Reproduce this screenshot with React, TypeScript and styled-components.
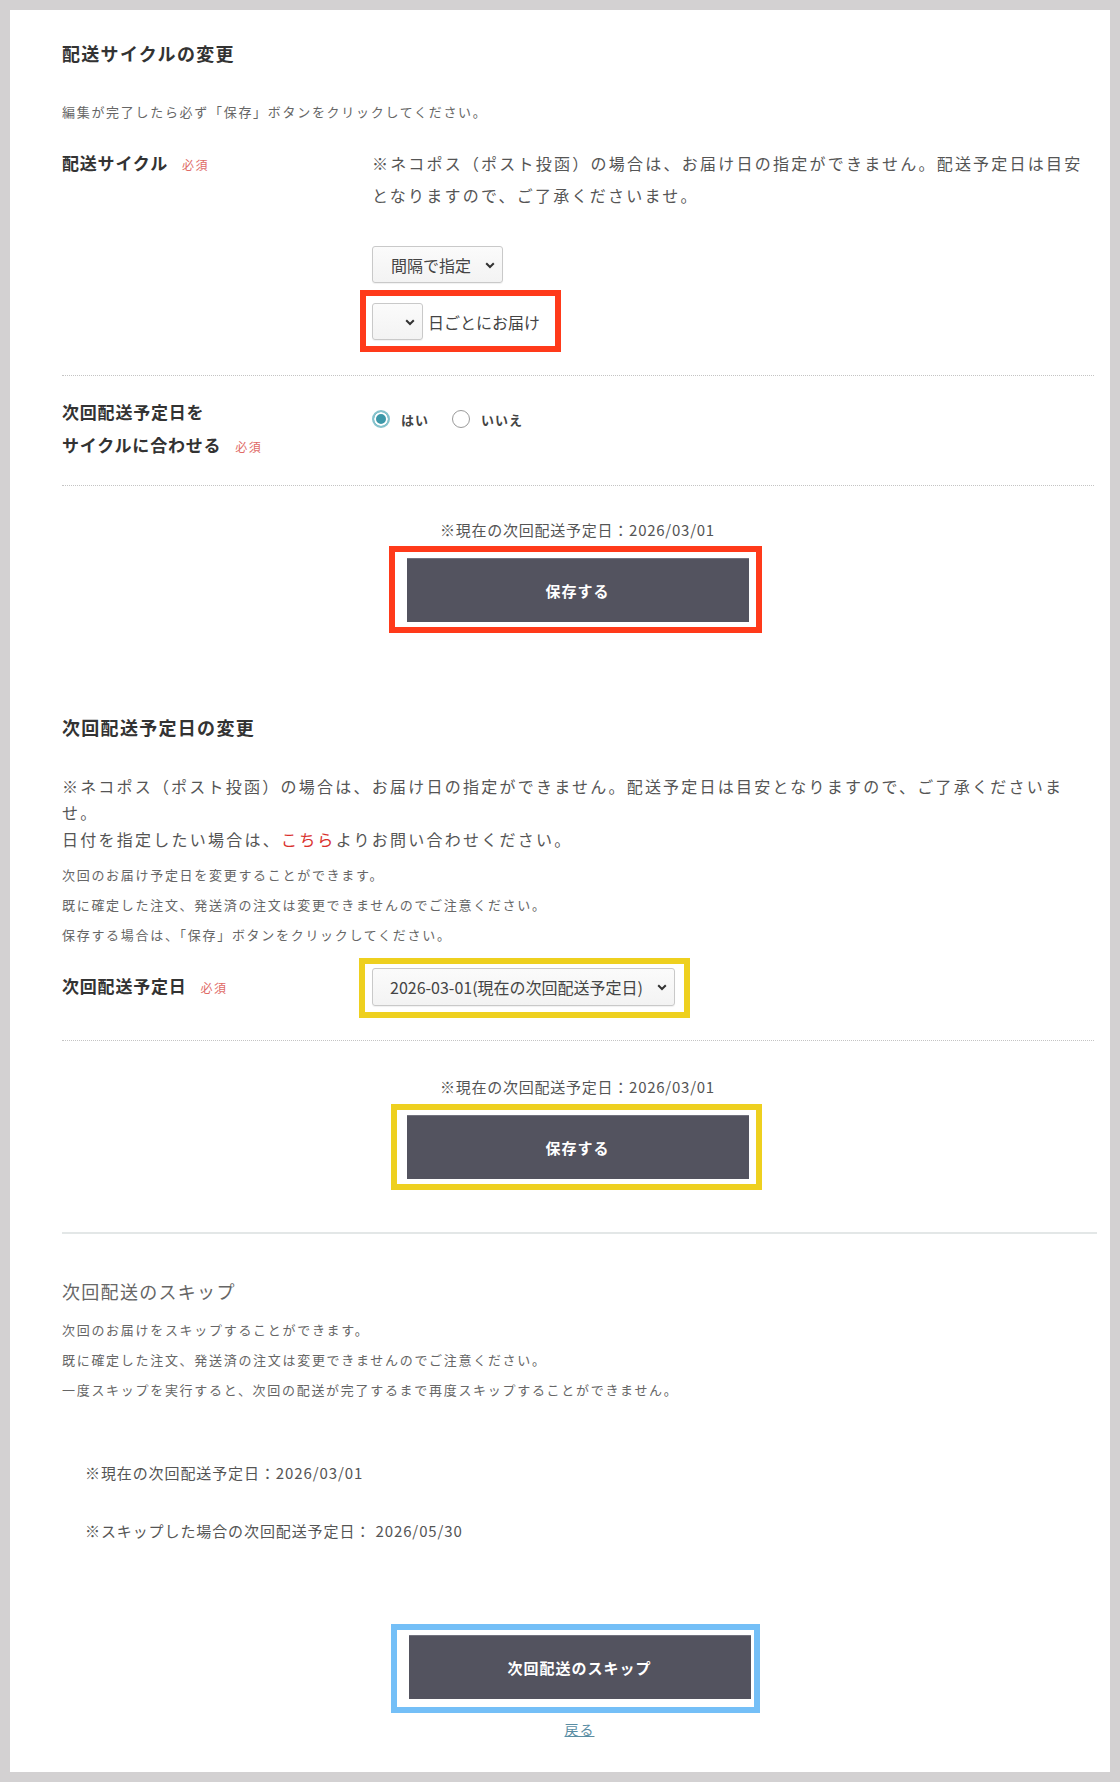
import React from 'react';
import styled, { createGlobalStyle } from 'styled-components';

const GlobalStyle = createGlobalStyle`
  html, body { margin: 0; padding: 0; background: #d3d1d2; }
  body {
    font-family: "Noto Sans CJK JP", "Noto Sans", sans-serif;
    color: #444;
  }
  * { box-sizing: border-box; }
`;

const Frame = styled.div`
  padding: 10px;
  background: #d3d1d2;
`;

const Panel = styled.main`
  background: #fff;
  min-height: 1762px;
  padding: 30px 13px 32px 52px;
`;

const SectionTitle = styled.h2<{ $light?: boolean }>`
  margin: 0;
  font-size: 18px;
  line-height: 27px;
  letter-spacing: 1.3px;
  font-weight: ${p => (p.$light ? 400 : 700)};
  color: ${p => (p.$light ? '#666' : '#333')};
`;

const Note = styled.p<{ $mt?: number; $lh?: number }>`
  margin: ${p => p.$mt ?? 0}px 0 0;
  font-size: 13px;
  line-height: ${p => p.$lh ?? 20}px;
  letter-spacing: 1.7px;
  color: #666;
`;

const FormRow = styled.div<{ $pt: number; $pb: number }>`
  display: grid;
  grid-template-columns: 310px 1fr;
  align-items: start;
  margin-right: 3px;
  padding: ${p => p.$pt}px 0 ${p => p.$pb}px;
  border-bottom: 1px dotted #c4c4c4;
`;

const Label = styled.div<{ $pt?: number; $lh?: number }>`
  padding-top: ${p => p.$pt ?? 0}px;
  font-size: 17px;
  line-height: ${p => p.$lh ?? 32}px;
  letter-spacing: 0.8px;
  font-weight: 700;
  color: #333;
`;

const Required = styled.span`
  margin-left: 14px;
  font-size: 12px;
  letter-spacing: 1.5px;
  font-weight: 400;
  color: #e06a66;
`;

const Field = styled.div<{ $pt?: number }>`
  padding-top: ${p => p.$pt ?? 0}px;
  min-width: 0;
`;

const FieldText = styled.p`
  margin: 0;
  font-size: 16px;
  line-height: 32px;
  letter-spacing: 0.14em;
  color: #555;
`;

const Paragraph = styled.p<{ $mt: number }>`
  margin: ${p => p.$mt}px 0 0;
  font-size: 16px;
  line-height: 26px;
  letter-spacing: 0.14em;
  color: #555;
`;

const RedLink = styled.a`
  color: #d9302c;
  text-decoration: none;
`;

const NoteList = styled.div<{ $mt: number }>`
  margin-top: ${p => p.$mt}px;
`;

const SelectWrap = styled.div<{ $mt?: number }>`
  position: relative;
  display: block;
  width: fit-content;
  margin-top: ${p => p.$mt ?? 0}px;
`;

const Select = styled.select<{ $w: number; $h: number; $pl: number }>`
  appearance: none;
  -webkit-appearance: none;
  display: block;
  width: ${p => p.$w}px;
  height: ${p => p.$h}px;
  padding: 0 24px 0 ${p => p.$pl}px;
  font-family: inherit;
  font-size: 16px;
  color: #444;
  background: linear-gradient(#fbfbfb, #f3f3f3);
  border: 1px solid #c9c9c9;
  border-radius: 3px;
  box-shadow: 0 1px 1px rgba(0, 0, 0, 0.06);
`;

const Chevron = styled.svg`
  position: absolute;
  right: 8px;
  top: 50%;
  width: 10px;
  height: 7px;
  margin-top: -3px;
  pointer-events: none;
`;

const Highlight = styled.div<{ $color: string; $inset: string; $mt?: number }>`
  position: relative;
  display: flex;
  align-items: center;
  gap: 5px;
  width: fit-content;
  margin-top: ${p => p.$mt ?? 0}px;
  &::after {
    content: '';
    position: absolute;
    inset: ${p => p.$inset};
    border: 6px solid ${p => p.$color};
    pointer-events: none;
  }
`;

const InlineText = styled.span`
  font-size: 16px;
  line-height: 20px;
  color: #444;
`;

const RadioGroup = styled.div`
  display: flex;
  align-items: center;
  gap: 23px;
  height: 20px;
`;

const RadioLabel = styled.label`
  display: flex;
  align-items: center;
  gap: 11px;
  font-size: 13px;
  font-weight: 700;
  letter-spacing: 1px;
  color: #444;
`;

const Radio = styled.input.attrs({ type: 'radio' })`
  appearance: none;
  -webkit-appearance: none;
  margin: 0;
  width: 18px;
  height: 18px;
  border-radius: 50%;
  border: 1.5px solid #9a9a9a;
  background: #fff;
  &:checked {
    border: 2px solid #86c3cd;
    background: #3d98a9;
    box-shadow: inset 0 0 0 2px #fff;
  }
`;

const SaveBlock = styled.div<{ $mt: number; $shift?: number }>`
  display: flex;
  flex-direction: column;
  align-items: center;
  gap: 16px;
  margin-top: ${p => p.$mt}px;
  padding-right: ${p => p.$shift ?? 0}px;
`;

const CurrentDate = styled.p`
  margin: 0;
  font-size: 15px;
  line-height: 24px;
  letter-spacing: 0.75px;
  color: #555;
`;

const DarkButton = styled.button`
  display: block;
  width: 342px;
  height: 64px;
  border: none;
  border-top: 1px solid #72727e;
  background: #53535f;
  color: #fff;
  font-family: inherit;
  font-size: 15px;
  font-weight: 700;
  letter-spacing: 1px;
  cursor: pointer;
`;

const Section = styled.section<{ $mt: number }>`
  margin-top: ${p => p.$mt}px;
`;

const SolidRule = styled.hr`
  margin: 53px 0 0;
  border: none;
  height: 2px;
  background: #e3e7e7;
`;

const DateLine = styled.p<{ $mt: number }>`
  margin: ${p => p.$mt}px 0 0;
  padding-left: 23px;
  font-size: 15px;
  line-height: 24px;
  letter-spacing: 0.9px;
  color: #555;
`;

const BackLink = styled.a`
  display: block;
  width: fit-content;
  margin: 20px auto 0;
  font-size: 14px;
  line-height: 20px;
  letter-spacing: 1px;
  color: #5a8da3;
  text-decoration: underline;
`;

const DownChevron = () => (
  <Chevron viewBox="0 0 10 7">
    <polyline points="1.2,1.2 5,5 8.8,1.2" fill="none" stroke="#333" strokeWidth="2" />
  </Chevron>
);

export default function App() {
  return (
    <>
      <GlobalStyle />
      <Frame>
        <Panel>
          <SectionTitle>配送サイクルの変更</SectionTitle>
          <Note $mt={35}>編集が完了したら必ず「保存」ボタンをクリックしてください。</Note>

          <FormRow $pt={25} $pb={35}>
            <Label>
              配送サイクル<Required>必須</Required>
            </Label>
            <Field>
              <FieldText>
                ※ネコポス（ポスト投函）の場合は、お届け日の指定ができません。配送予定日は目安となりますので、ご了承くださいませ。
              </FieldText>
              <SelectWrap $mt={35}>
                <Select $w={131} $h={37} $pl={18} defaultValue="interval">
                  <option value="interval">間隔で指定</option>
                </Select>
                <DownChevron />
              </SelectWrap>
              <Highlight $color="#ff3a1a" $inset="-13px -21px -12px -12px" $mt={20}>
                <SelectWrap>
                  <Select $w={51} $h={37} $pl={10} defaultValue="">
                    <option value=""></option>
                  </Select>
                  <DownChevron />
                </SelectWrap>
                <InlineText>日ごとにお届け</InlineText>
              </Highlight>
            </Field>
          </FormRow>

          <FormRow $pt={19} $pb={22}>
            <Label $lh={33}>
              次回配送予定日を
              <br />
              サイクルに合わせる<Required>必須</Required>
            </Label>
            <Field $pt={14}>
              <RadioGroup>
                <RadioLabel>
                  <Radio name="align" defaultChecked />
                  はい
                </RadioLabel>
                <RadioLabel>
                  <Radio name="align" />
                  いいえ
                </RadioLabel>
              </RadioGroup>
            </Field>
          </FormRow>

          <SaveBlock $mt={32} $shift={4}>
            <CurrentDate>※現在の次回配送予定日：2026/03/01</CurrentDate>
            <Highlight $color="#ff3a1a" $inset="-12px -13px -11px -18px">
              <DarkButton>保存する</DarkButton>
            </Highlight>
          </SaveBlock>

          <Section $mt={92}>
            <SectionTitle>次回配送予定日の変更</SectionTitle>
            <Paragraph $mt={32}>
              ※ネコポス（ポスト投函）の場合は、お届け日の指定ができません。配送予定日は目安となりますので、ご了承くださいませ。
            </Paragraph>
            <Paragraph $mt={1}>
              日付を指定したい場合は、<RedLink href="#">こちら</RedLink>よりお問い合わせください。
            </Paragraph>
            <NoteList $mt={8}>
              <Note $lh={30}>次回のお届け予定日を変更することができます。</Note>
              <Note $lh={30}>既に確定した注文、発送済の注文は変更できませんのでご注意ください。</Note>
              <Note $lh={30}>保存する場合は、「保存」ボタンをクリックしてください。</Note>
            </NoteList>

            <FormRow $pt={18} $pb={34}>
              <Label $pt={2}>
                次回配送予定日<Required>必須</Required>
              </Label>
              <Field>
                <Highlight $color="#eed01f" $inset="-10px -15px -12px -13px">
                  <SelectWrap>
                    <Select $w={303} $h={38} $pl={17} defaultValue="2026-03-01">
                      <option value="2026-03-01">2026-03-01(現在の次回配送予定日)</option>
                    </Select>
                    <DownChevron />
                  </SelectWrap>
                </Highlight>
              </Field>
            </FormRow>

            <SaveBlock $mt={34} $shift={4}>
              <CurrentDate>※現在の次回配送予定日：2026/03/01</CurrentDate>
              <Highlight $color="#eed01f" $inset="-11px -13px -11px -16px">
                <DarkButton>保存する</DarkButton>
              </Highlight>
            </SaveBlock>
          </Section>

          <SolidRule />

          <Section $mt={44}>
            <SectionTitle $light>次回配送のスキップ</SectionTitle>
            <NoteList $mt={10}>
              <Note $lh={30}>次回のお届けをスキップすることができます。</Note>
              <Note $lh={30}>既に確定した注文、発送済の注文は変更できませんのでご注意ください。</Note>
              <Note $lh={30}>一度スキップを実行すると、次回の配送が完了するまで再度スキップすることができません。</Note>
            </NoteList>
            <DateLine $mt={56}>※現在の次回配送予定日：2026/03/01</DateLine>
            <DateLine $mt={34}>※スキップした場合の次回配送予定日： 2026/05/30</DateLine>
            <SaveBlock $mt={92}>
              <Highlight $color="#74bff7" $inset="-11px -9px -14px -18px">
                <DarkButton>次回配送のスキップ</DarkButton>
              </Highlight>
            </SaveBlock>
            <BackLink href="#">戻る</BackLink>
          </Section>
        </Panel>
      </Frame>
    </>
  );
}
